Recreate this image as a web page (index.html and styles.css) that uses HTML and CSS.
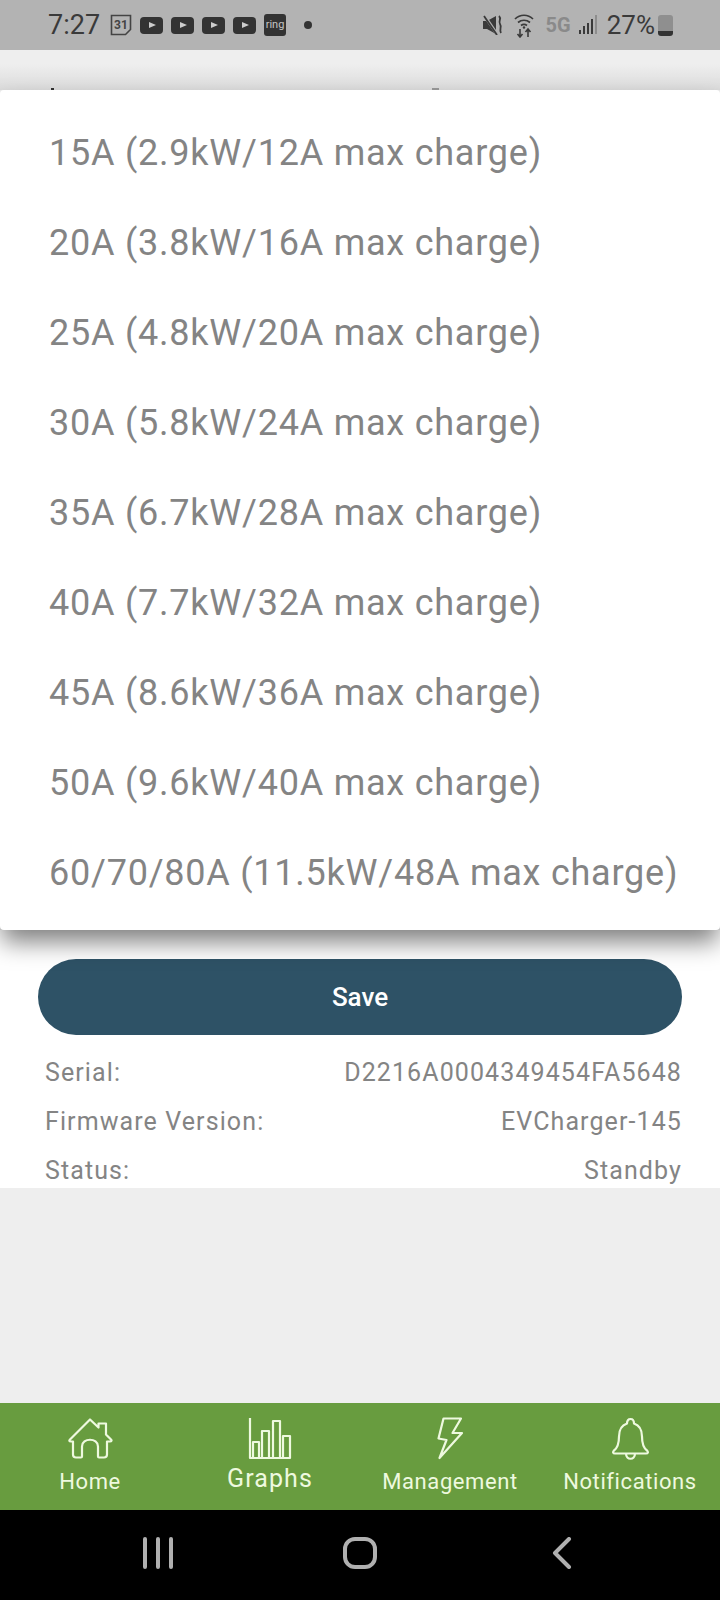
FILE: index.html
```html
<!DOCTYPE html>
<html>
<head>
  <title>Charger Settings</title>
  <link rel="stylesheet" href="styles.css">
</head>
<body>
  <div class="phone">
    <!-- Android status bar -->
    <div class="status-bar">
      <div class="status-left">
        <span class="time">7:27</span>
        <svg class="cal" width="22" height="22" viewBox="0 0 22 22"><path d="M1.500 1.500h19v14l-5 5h-14z" fill="none" stroke="#444" stroke-width="1.600"/><text x="11" y="15" text-anchor="middle" class="cal-text">31</text></svg>
        <span class="yt"></span>
        <span class="yt"></span>
        <span class="yt"></span>
        <span class="yt"></span>
        <span class="ring">ring</span>
        <span class="dot"></span>
      </div>
      <div class="status-right">
        <svg width="20" height="20" viewBox="0 0 20 20"><path d="M0 6h4l9-5v18l-9-5H0z" fill="#3a3a3a"/><path d="M1 0l13 19" stroke="#b3b3b3" stroke-width="3"/><path d="M1 1l13 19" stroke="#3a3a3a" stroke-width="1.800"/><path d="M16 1c3 3-1 5 1 8s-1 5 1 9" fill="none" stroke="#3a3a3a" stroke-width="1.800"/></svg>
        <svg class="wifi" width="20" height="26" viewBox="0 0 20 26"><path d="M1 7c5-5 13-5 18 0M4 10.500c3.500-3 8.500-3 12 0M7 13.500c2-1.500 4-1.500 6 0" fill="none" stroke="#3a3a3a" stroke-width="1.700"/><circle cx="10" cy="15.500" r="1.200" fill="#3a3a3a"/><path d="M6 17v8M3.500 22l2.500 3 2.500-3M14 25v-8M11.500 20l2.500-3 2.500 3" fill="none" stroke="#3a3a3a" stroke-width="1.600"/></svg>
        <span class="net">5G</span>
        <svg class="signal" width="18" height="20" viewBox="0 0 18 20"><rect x="0" y="15" width="2" height="4" fill="#3a3a3a"/><rect x="4" y="11" width="2" height="8" fill="#3a3a3a"/><rect x="8" y="8" width="2" height="11" fill="#3a3a3a"/><rect x="12" y="4" width="2" height="15" fill="#3a3a3a"/><rect x="16" y="0" width="2" height="19" fill="#8d8d8d"/></svg>
        <span class="battery-text">27%</span>
        <span class="battery"></span>
      </div>
    </div>

    <div class="content">
      <div class="top-strip">
        <span class="peek peek-a"></span>
        <span class="peek peek-b"></span>
      </div>

      <!-- Dropdown list, open -->
      <ul class="menu">
        <li>15A (2.9kW/12A max charge)</li>
        <li>20A (3.8kW/16A max charge)</li>
        <li>25A (4.8kW/20A max charge)</li>
        <li>30A (5.8kW/24A max charge)</li>
        <li>35A (6.7kW/28A max charge)</li>
        <li>40A (7.7kW/32A max charge)</li>
        <li>45A (8.6kW/36A max charge)</li>
        <li>50A (9.6kW/40A max charge)</li>
        <li>60/70/80A (11.5kW/48A max charge)</li>
      </ul>

      <div class="panel">
        <button class="save" type="button">Save</button>
        <div class="info-row"><span>Serial:</span><span>D2216A0004349454FA5648</span></div>
        <div class="info-row"><span>Firmware Version:</span><span>EVCharger-145</span></div>
        <div class="info-row"><span>Status:</span><span>Standby</span></div>
      </div>
    </div>

    <!-- Bottom tabs -->
    <div class="tabs">
      <div class="tab">
        <svg width="45" height="42" viewBox="0 0 45 42"><path d="M2 22L22 2l8.500 8V6H38v11l5 5c1 1 .5 2-1 2h-3v13c0 2-1 3-3 3h-5c-1 0-1-1-1-1V29c0-9-16-9-16 0v10s0 1-1 1H8c-2 0-3-1-3-3V24H3c-2 0-2-1-1-2z" class="tab-line"/></svg>
        <span class="tab-label">Home</span>
      </div>
      <div class="tab tab-graphs">
        <svg width="45" height="43" viewBox="0 0 45 43"><path d="M2 1v40h40V19h-7v22M32 41V4h-7v37M21 41V14h-7v27M11 41V25H5v16" class="tab-line"/></svg>
        <span class="tab-label">Graphs</span>
      </div>
      <div class="tab">
        <svg width="27" height="43" viewBox="0 0 27 43"><path d="M6.500 1.500H24L15.500 16H25L2.500 41l7-18-8-1.500z" class="tab-line"/></svg>
        <span class="tab-label">Management</span>
      </div>
      <div class="tab">
        <svg width="37" height="42" viewBox="0 0 37 42"><path d="M15 6c0-6 7-6 7 0 6 2 8 7 8 13 0 7 1 11 5 14 1.500 1.500 1 3-1 3H3c-2 0-2.500-1.500-1-3 4-3 5-7 5-14 0-6 2-11 8-13zM14 36c0 7 9 7 9 0" class="tab-line"/></svg>
        <span class="tab-label">Notifications</span>
      </div>
    </div>

    <!-- Android nav buttons -->
    <div class="nav-bar">
      <div class="nav-cell">
        <svg width="30" height="32" viewBox="0 0 30 32"><path d="M2 2v28M15 2v28M28 2v28" class="nav-line"/></svg>
      </div>
      <div class="nav-cell">
        <svg width="34" height="32" viewBox="0 0 34 32"><rect x="2" y="2" width="30" height="28" rx="10" class="nav-line"/></svg>
      </div>
      <div class="nav-cell">
        <svg width="20" height="32" viewBox="0 0 20 32"><path d="M17 2L3 16l14 14" class="nav-line"/></svg>
      </div>
    </div>
  </div>
</body>
</html>
```

FILE: styles.css
```css
* {
  box-sizing: border-box;
}

body {
  margin: 0;
  font-family: Roboto, "Liberation Sans", sans-serif;
  background: #eeeeee;
}

.phone {
  width: 720px;
  height: 1600px;
  display: flex;
  flex-direction: column;
  overflow: hidden;
}

/* Status bar */
.status-bar {
  height: 50px;
  flex: none;
  background: #b3b3b3;
  color: #3a3a3a;
  display: flex;
  justify-content: space-between;
  align-items: center;
  padding: 0 47px 0 48px;
}

.status-left,
.status-right {
  display: flex;
  align-items: center;
}

.time {
  font-size: 27px;
  width: 62px;
}

.cal {
  margin-right: 8px;
}

.cal-text {
  font-family: Roboto, sans-serif;
  font-size: 12px;
  font-weight: 700;
  fill: #444;
}

.yt {
  width: 23px;
  height: 17px;
  margin-right: 8px;
  border-radius: 4px;
  background: #333333;
  position: relative;
}

.yt::after {
  content: "";
  position: absolute;
  left: 9px;
  top: 5px;
  border-left: 7px solid #cccccc;
  border-top: 3.500px solid transparent;
  border-bottom: 3.500px solid transparent;
}

.ring {
  width: 22px;
  height: 22px;
  border-radius: 3px;
  background: #333333;
  color: #c4c4c4;
  font-size: 11px;
  line-height: 21px;
  text-align: center;
}

.dot {
  width: 8px;
  height: 8px;
  margin-left: 18px;
  border-radius: 50%;
  background: #333333;
}

.wifi {
  margin-left: 11px;
}

.net {
  margin-left: 12px;
  font-size: 20px;
  font-weight: 700;
  color: #8a8a8a;
}

.signal {
  margin-left: 8px;
}

.battery-text {
  margin-left: 10px;
  font-size: 26px;
}

.battery {
  width: 15px;
  height: 21px;
  margin-left: 3px;
  border-radius: 3px;
  background: linear-gradient(#8f8f8f 75%, #333333 75%);
}

/* Main area */
.content {
  flex: 1;
  display: flex;
  flex-direction: column;
}

.top-strip {
  height: 40px;
  flex: none;
  background: linear-gradient(#eeeeee 35%, #dcdcdc);
  position: relative;
}

.peek {
  position: absolute;
  bottom: 0;
  height: 2px;
  background: #333333;
}

.peek-a {
  left: 51px;
  width: 3px;
}

.peek-b {
  left: 432px;
  width: 7px;
  background: #999999;
}

.menu {
  list-style: none;
  margin: 0;
  padding: 18px 0 12px;
  height: 840px;
  flex: none;
  background: #ffffff;
  border-radius: 4px;
  box-shadow: 0 14px 24px -2px rgba(0, 0, 0, 0.5);
  position: relative;
}

.menu li {
  height: 90px;
  line-height: 90px;
  padding-left: 49px;
  font-size: 36px;
  letter-spacing: 0.77px;
  color: #848484;
  white-space: nowrap;
}

.panel {
  height: 258px;
  flex: none;
  background: #ffffff;
  padding: 29px 38px 0;
}

.save {
  display: block;
  width: 100%;
  height: 76px;
  margin-bottom: 13px;
  border: none;
  border-radius: 38px;
  background: #2e5266;
  color: #ffffff;
  font-family: inherit;
  font-size: 26px;
  font-weight: 500;
}

.info-row {
  display: flex;
  justify-content: space-between;
  height: 49px;
  line-height: 49px;
  padding-left: 7px;
  font-size: 25px;
  letter-spacing: 1.1px;
  color: #848484;
}

/* Bottom tabs */
.tabs {
  height: 107px;
  flex: none;
  background: #689c3f;
  display: grid;
  grid-template-columns: repeat(4, 1fr);
}

.tab {
  display: flex;
  flex-direction: column;
  align-items: center;
  padding-top: 14px;
  color: #eef9df;
}

.tab svg {
  height: 43px;
  flex: none;
}

.tab-line {
  fill: none;
  stroke: #eef9df;
  stroke-width: 2.200;
  stroke-linejoin: round;
}

.tab-label {
  margin-top: 8px;
  font-size: 22px;
  line-height: 28px;
  letter-spacing: 0.6px;
  white-space: nowrap;
}

.tab-graphs .tab-label {
  margin-top: 5px;
  font-size: 25px;
  letter-spacing: 1.1px;
}

/* Android nav */
.nav-bar {
  height: 90px;
  flex: none;
  background: #000000;
  display: grid;
  grid-template-columns: 1fr 1fr 1fr;
  padding: 0 57px 4px;
}

.nav-cell {
  display: flex;
  align-items: center;
  justify-content: center;
}

.nav-line {
  fill: none;
  stroke: #b0b0b0;
  stroke-width: 4;
  stroke-linecap: round;
  stroke-linejoin: round;
}
```
